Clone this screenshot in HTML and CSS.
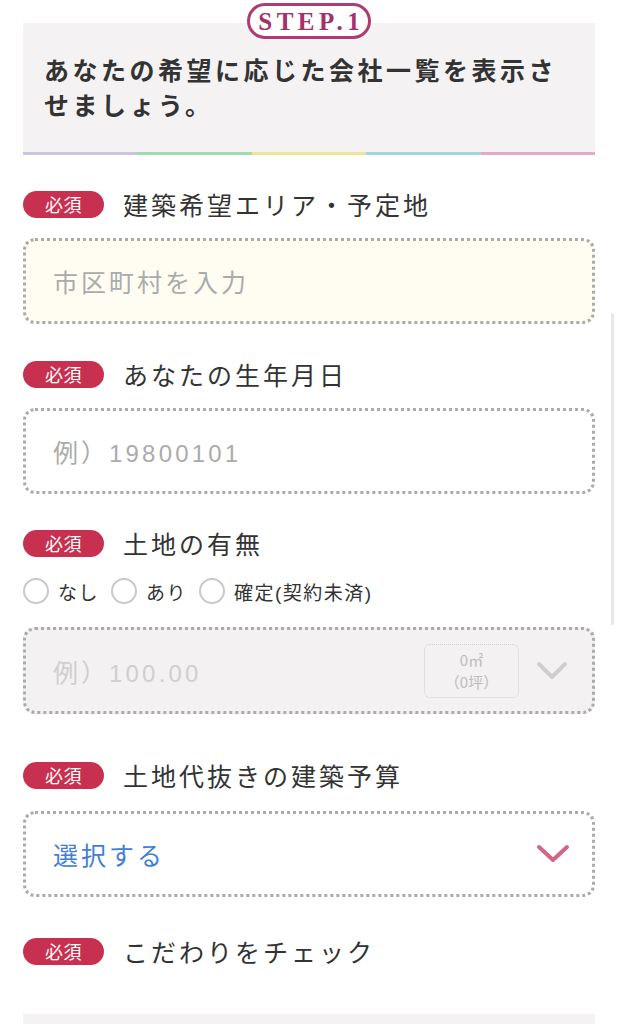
FILE: index.html
```html
<!DOCTYPE html>
<html lang="ja">
<head>
<meta charset="utf-8">
<link rel="stylesheet" href="styles.css">
</head>
<body>
<div class="page">
  <div class="step-head">
    <div class="step-badge">STEP.1</div>
    <p class="step-title">あなたの希望に応じた会社一覧を表示させましょう。</p>
    <div class="rainbow">
      <span class="c1"></span><span class="c2"></span><span class="c3"></span><span class="c4"></span><span class="c5"></span>
    </div>
  </div>

  <div class="field f1">
    <div class="label-row"><span class="req">必須</span><span class="label">建築希望エリア・予定地</span></div>
    <div class="box box-yellow"><span class="ph">市区町村を入力</span></div>
  </div>

  <div class="field f2">
    <div class="label-row"><span class="req">必須</span><span class="label">あなたの生年月日</span></div>
    <div class="box"><span class="ph">例）<span class="num">19800101</span></span></div>
  </div>

  <div class="field f3">
    <div class="label-row"><span class="req">必須</span><span class="label">土地の有無</span></div>
    <div class="radios">
      <label class="radio"><span class="circle"></span>なし</label>
      <label class="radio"><span class="circle"></span>あり</label>
      <label class="radio"><span class="circle"></span>確定(契約未済)</label>
    </div>
    <div class="box box-disabled">
      <span class="ph ph-light">例）<span class="num">100.00</span></span>
      <div class="area-box"><span>0㎡</span><span>（0坪）</span></div>
      <svg class="chev" width="32" height="20" viewBox="0 0 32 20"><path d="M3 3 L16 16 L29 3" fill="none" stroke="#cfcfcf" stroke-width="4" stroke-linecap="round" stroke-linejoin="round"/></svg>
    </div>
  </div>

  <div class="field f4">
    <div class="label-row"><span class="req">必須</span><span class="label">土地代抜きの建築予算</span></div>
    <div class="box box-select">
      <span class="sel">選択する</span>
      <svg class="chev chev-pink" width="34" height="20" viewBox="0 0 34 20"><path d="M3 3 L17 16 L31 3" fill="none" stroke="#d36585" stroke-width="4" stroke-linecap="round" stroke-linejoin="round"/></svg>
    </div>
  </div>

  <div class="field f5">
    <div class="label-row"><span class="req">必須</span><span class="label">こだわりをチェック</span></div>
  </div>

  <div class="next-box"></div>
</div>
<div class="scrollbar"></div>
</body>
</html>
```

FILE: styles.css
```css
html, body {
  margin: 0;
  padding: 0;
  background: #ffffff;
}
body {
  font-family: "Liberation Sans", "Noto Sans CJK JP", sans-serif;
  color: #333333;
  overflow: hidden;
  height: 1024px;
}
.page {
  padding: 23px 23px 0;
}
.step-head {
  position: relative;
  background: #f4f2f3;
}
.step-badge {
  position: absolute;
  top: -20px;
  left: 50%;
  transform: translateX(-50%);
  width: 124px;
  height: 36px;
  box-sizing: border-box;
  border: 3px solid #b03a72;
  border-radius: 18px;
  background: #ffffff;
  color: #a5306a;
  font-family: "Liberation Serif", "DejaVu Serif", serif;
  font-weight: bold;
  font-size: 25px;
  letter-spacing: 4.5px;
  text-indent: 4.5px;
  display: flex;
  align-items: center;
  justify-content: center;
  line-height: 1;
}
.step-title {
  margin: 0;
  padding: 29px 21px 30px 21px;
  font-family: "Noto Sans CJK JP", sans-serif;
  font-size: 25px;
  line-height: 35px;
  font-weight: 700;
  letter-spacing: 3.5px;
  color: #333333;
}
.rainbow {
  display: flex;
  height: 3px;
}
.rainbow span { flex: 1; }
.c1 { background: #c9c5df; }
.c2 { background: #9fdcb4; }
.c3 { background: #eee597; }
.c4 { background: #9fd5dc; }
.c5 { background: #e3a9c9; }

.field { margin-top: 33px; }
.f1 { margin-top: 32px; }
.f3 { margin-top: 32px; }
.f4 { margin-top: 44px; }
.f5 { margin-top: 37px; }

.label-row {
  display: flex;
  align-items: center;
  height: 34px;
  margin-bottom: 17px;
}
.f4 .label-row { margin-bottom: 19px; }
.req {
  width: 81px;
  height: 27px;
  border-radius: 14px;
  background: #c8304f;
  color: #ffffff;
  font-family: "Noto Sans CJK JP", sans-serif;
  font-size: 18px;
  letter-spacing: 0.5px;
  display: flex;
  align-items: center;
  justify-content: center;
  line-height: 1;
  margin-right: 19px;
}
.label {
  font-family: "Noto Sans CJK JP", sans-serif;
  font-size: 25px;
  letter-spacing: 3px;
  font-weight: 400;
  color: #333333;
  line-height: 34px;
}
.box {
  height: 86px;
  box-sizing: border-box;
  border: 3px dotted #ababab;
  border-radius: 12px;
  background: #ffffff;
  display: flex;
  align-items: center;
  padding: 0 22px 0 27px;
}
.box-yellow { background: #fffdf2; }
.box-disabled { background: #f3f1f2; height: 87px; padding-right: 24px; }
.ph {
  font-family: "Noto Sans CJK JP", sans-serif;
  font-size: 25px;
  letter-spacing: 3px;
  color: #ababab;
  flex: 1;
}
.num {
  font-family: "Liberation Sans", sans-serif;
  font-size: 24px;
  letter-spacing: 3.2px;
}
.ph-light { color: #cfcfcf; }
.area-box {
  width: 95px;
  height: 54px;
  box-sizing: border-box;
  border: 1px dotted #cfcfcf;
  border-radius: 6px;
  display: flex;
  flex-direction: column;
  align-items: center;
  justify-content: center;
  font-family: "Noto Sans CJK JP", sans-serif;
  font-size: 15px;
  line-height: 22px;
  color: #bdbdbd;
  margin-right: 17px;
}
.chev { display: block; }
.sel {
  flex: 1;
  font-family: "Noto Sans CJK JP", sans-serif;
  font-size: 25px;
  letter-spacing: 3px;
  color: #3f80d6;
}
.radios {
  display: flex;
  align-items: center;
  height: 26px;
  margin: 18px 0 23px;
}
.radio {
  display: flex;
  align-items: center;
  font-size: 19px;
  letter-spacing: 1.5px;
  color: #333333;
  margin-right: 12px;
}
.circle {
  width: 26px;
  height: 26px;
  box-sizing: border-box;
  border: 2px solid #c9c9c9;
  border-radius: 50%;
  background: #ffffff;
  margin-right: 9px;
}
.next-box {
  margin-top: 46px;
  height: 60px;
  background: #f4f2f3;
}
.scrollbar {
  position: absolute;
  left: 611px;
  top: 313px;
  width: 3px;
  height: 312px;
  background: #e8e8e8;
  border-radius: 2px;
}
```
